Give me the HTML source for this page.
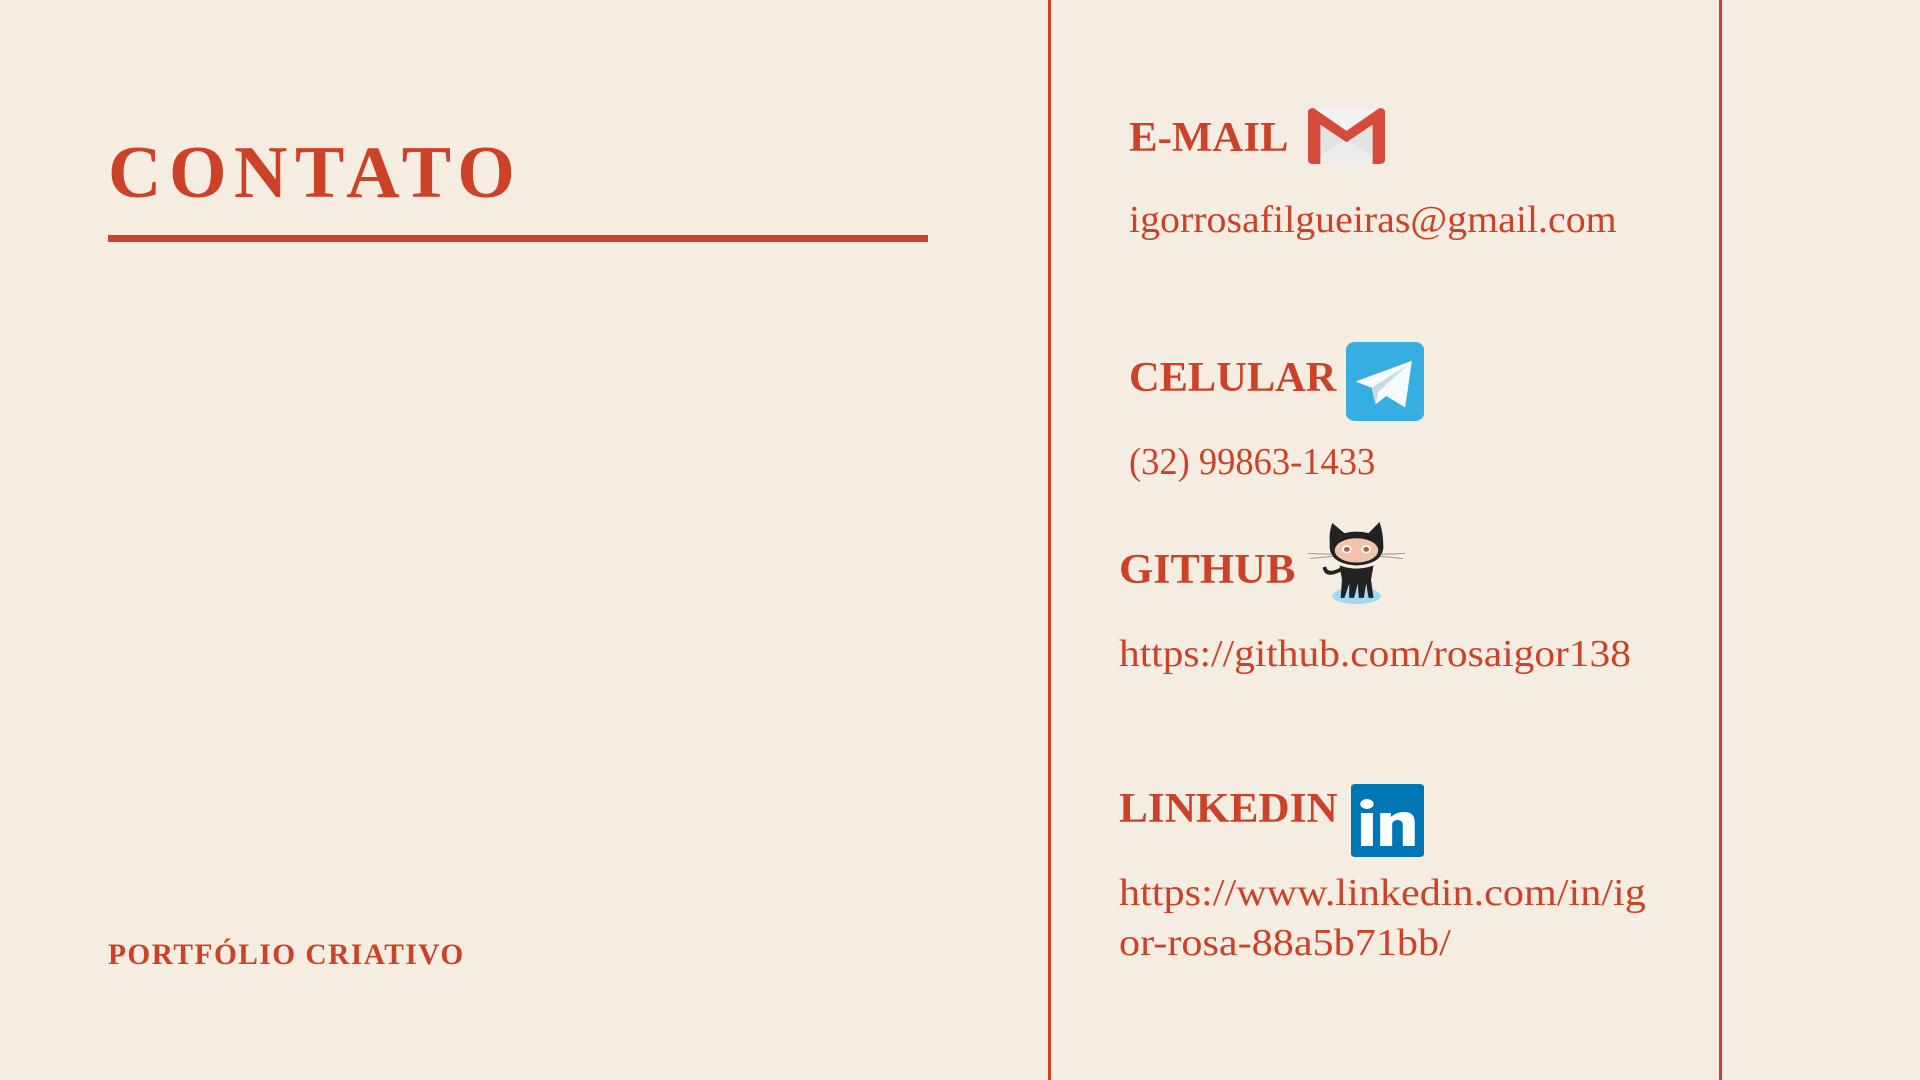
<!DOCTYPE html>
<html><head><meta charset="utf-8"><style>
body{margin:0;width:1920px;height:1080px;background:#f6ede2;overflow:hidden;position:relative;font-family:"Liberation Serif",serif;color:#cc4228}
.a{position:absolute;white-space:nowrap;line-height:1}
.h{font-weight:bold;transform-origin:left center;}
.t{transform-origin:left center;}
.vl{position:absolute;top:0;width:3px;height:1080px;background:#cc4228}
</style></head><body>
<div class="vl" style="left:1048px"></div>
<div class="vl" style="left:1719px"></div>
<div class="a h" style="left:108px;top:136px;font-size:74px;letter-spacing:7.5px">CONTATO</div>
<div style="position:absolute;left:108px;top:235px;width:820px;height:7px;background:#cc4228"></div>
<div class="a h" style="left:108px;top:940px;font-size:30px;letter-spacing:1.5px;transform:scaleX(.98)">PORTFÓLIO CRIATIVO</div>

<div class="a h" style="left:1129px;top:117px;font-size:42px;transform:scaleX(1.02)">E-MAIL</div>
<svg class="a" style="left:1308px;top:108px" width="77" height="56" viewBox="0 0 56 54" preserveAspectRatio="none">
<rect x="0" y="0" width="56" height="54" rx="4" fill="#e3e3e3"/>
<path d="M0 4 L28 28 L56 4 L56 0 L0 0Z" fill="#f2f2f2"/>
<path d="M0 54 L28 30 L56 54Z" fill="#ececec"/>
<path d="M0 4 Q0 0 4 0 L28 22 L52 0 Q56 0 56 4 L56 50 Q56 54 52 54 L47 54 L47 16 L28 33 L9 16 L9 54 L4 54 Q0 54 0 50Z" fill="#d44b3b"/>
</svg>
<div class="a t" style="left:1129px;top:201px;font-size:38px;transform:scaleX(1.05)">igorrosafilgueiras@gmail.com</div>

<div class="a h" style="left:1129px;top:357px;font-size:42px;transform:scaleX(1.01)">CELULAR</div>
<svg class="a" style="left:1346px;top:342px" width="78" height="79" viewBox="0 0 58 76" preserveAspectRatio="none">
<rect width="58" height="76" rx="7" fill="#37aee2"/>
<path d="M7 38 L49 18 L44 63 L30 52 L22 60 L19 44Z" fill="#f6fbfe"/>
<path d="M19 44 L22 60 L24 48 L46 22Z" fill="#c8daea"/>
</svg>
<div class="a t" style="left:1129px;top:443px;font-size:38px;transform:scaleX(.96)">(32) 99863-1433</div>

<div class="a h" style="left:1119px;top:549px;font-size:42px;transform:scaleX(1.05)">GITHUB</div>
<svg class="a" style="left:1308px;top:519px" width="97" height="87" viewBox="0 0 80 86" preserveAspectRatio="none">
<ellipse cx="40" cy="76" rx="20" ry="8" fill="#9fd9f4"/>
<path d="M20 4 L30 14 Q40 11 50 14 L59 3 Q62 14 62 24 Q64 44 40 46 Q16 44 18 24 Q17 14 20 4Z" fill="#222"/>
<ellipse cx="40" cy="31" rx="18" ry="12" fill="#f1c4aa"/>
<circle cx="32" cy="30" r="4" fill="#fff"/><circle cx="32" cy="30" r="2.4" fill="#ad5c51"/>
<circle cx="48" cy="30" r="4" fill="#fff"/><circle cx="48" cy="30" r="2.4" fill="#ad5c51"/>
<path d="M26 46 Q40 52 54 46 L52 60 L54 78 L50 78 L48 64 L46 78 L42 78 L41 64 L38 78 L34 78 L34 64 L30 78 L27 78 L28 60Z M27 52 Q14 60 12 48 L15 47 Q16 55 27 48Z" fill="#222"/>
<path d="M0 34 L20 35 M2 39 L20 37 M60 35 L80 34 M60 37 L78 39" stroke="#999" stroke-width="1"/>
</svg>
<div class="a t" style="left:1119px;top:635px;font-size:38px;transform:scaleX(1.09)">https://github.com/rosaigor138</div>

<div class="a h" style="left:1119px;top:788px;font-size:42px;transform:scaleX(1.03)">LINKEDIN</div>
<svg class="a" style="left:1351px;top:784px" width="73" height="73" viewBox="0 0 55 73" preserveAspectRatio="none">
<rect width="55" height="73" rx="3" fill="#0077b5"/>
<circle cx="12" cy="20" r="5" fill="#fff"/>
<rect x="7.5" y="29" width="9" height="33" fill="#fff"/>
<path d="M22 29 L30 29 L30 33 Q34 28 40 28 Q48 28 48 38 L48 62 L39 62 L39 41 Q39 36 35 36 Q31 36 31 41 L31 62 L22 62Z" fill="#fff"/>
</svg>
<div class="a t" style="left:1119px;top:874px;font-size:38px;transform:scaleX(1.11)">https://www.linkedin.com/in/ig</div>
<div class="a t" style="left:1119px;top:924px;font-size:38px;transform:scaleX(1.11)">or-rosa-88a5b71bb/</div>
</body></html>
